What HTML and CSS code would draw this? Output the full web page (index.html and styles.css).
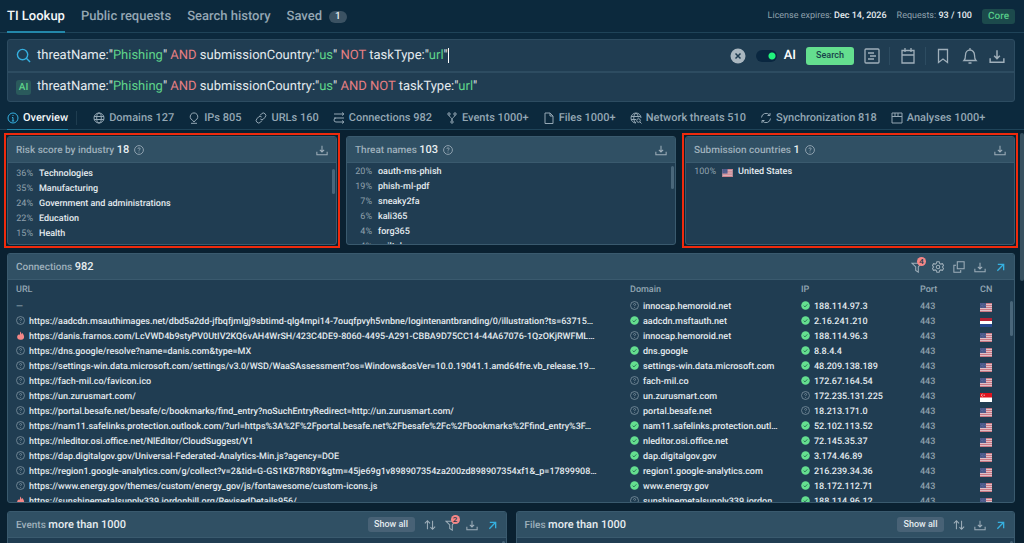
FILE: index.html
```html
<!DOCTYPE html>
<html lang="en">
<head>
<meta charset="utf-8">
<meta name="viewport" content="width=device-width, initial-scale=1">
<title>TI Lookup</title>
<link rel="stylesheet" href="styles.css">
</head>
<body>
<svg class="sprite" aria-hidden="true">
  <symbol id="download" viewBox="0 0 14 14"><path d="M7 2v7M4.500 6.800L7 9.300l2.500-2.500M1 9v3.500h12V9"/></symbol>
  <symbol id="help" viewBox="0 0 12 12"><circle cx="6" cy="6" r="5.300"/><path d="M4.700 4.800c0-2 2.700-1.800 2.700-.2 0 1-1.400 1-1.400 2.200M6 8v1"/></symbol>
  <symbol id="ok" viewBox="0 0 12 12"><circle cx="6" cy="6" r="5.700" fill="#64de8f" stroke="none"/><path d="M3.500 6.200l1.800 1.700 3.200-3.500" stroke="#1d5a49"/></symbol>
  <symbol id="fire" viewBox="0 0 12 12"><path d="M5.500.5c2 1.500 1.600 3 1.700 4l1.300-1.700c1.500 2 2.300 3.500 2.300 5A4.300 4 0 0 1 6 11.700 4.300 4 0 0 1 1.500 8c0-2 1-3 2-3.500l.8 1.200C5.500 4 5.700 2.500 5.500.5z" fill="#f58787" stroke="none"/></symbol>
  <symbol id="arrow" viewBox="0 0 10 10"><path d="M2 1.500h6.500V8M8.500 1.500L1.500 8.500"/></symbol>
  <symbol id="filter" viewBox="0 0 14 14"><path d="M1 2.500h11L8.500 7v6L5.500 11V7z"/></symbol>
  <symbol id="sort" viewBox="0 0 14 14"><path d="M4 12V2M1 5l3-3 3 3M10 2v10M7.500 9.500L10 12l3-3"/></symbol>
  <symbol id="gear" viewBox="0 0 14 14"><path d="M5.700.8h2.600l.6 2 1.300.8 2-.5 1.300 2.200L12.100 7l1.400 1.700-1.300 2.200-2-.5-1.300.8-.6 2H5.700l-.6-2-1.300-.8-2 .5L.5 8.700 1.900 7 .5 5.300l1.300-2.200 2 .5 1.300-.8z"/><circle cx="7" cy="7" r="2"/></symbol>
  <symbol id="copy" viewBox="0 0 14 14"><path d="M5 1h8v8H5zM3.500 5H1v8h8v-2.500"/></symbol>
  <symbol id="us" viewBox="0 0 12 9"><path fill="#dfbfc6" stroke="none" d="M0 0h12v9H0z"/><path stroke="#c97884" stroke-width="1" d="M0 .5h12M0 2.500h12M0 4.500h12M0 6.500h12M0 8.500h12"/><path fill="#485587" stroke="none" d="M0 0h6v5H0z"/><path stroke="#8791b5" stroke-width=".5" stroke-dasharray=".6 .8" d="M.5 1h5M1 2.500h5M.5 4h5"/></symbol>
  <symbol id="nl" viewBox="0 0 12 9"><path fill="#fff" stroke="none" d="M0 0h12v9H0z"/><path fill="#b32134" stroke="none" d="M0 0h12v3H0z"/><path fill="#26478e" stroke="none" d="M0 6h12v3H0z"/></symbol>
  <symbol id="sg" viewBox="0 0 12 9"><path fill="#fff" stroke="none" d="M0 0h12v9H0z"/><path fill="#e0141f" stroke="none" d="M0 0h12v4.500H0z"/><path stroke="#fff" stroke-width=".7" d="M2.500 1a1.300 1.300 0 0 0 0 2.500M3.500 2.200h1.500"/></symbol>
</svg>

<header class="topbar">
  <nav class="topnav" aria-label="Main">
    <a class="active" href="#">TI Lookup</a>
    <a href="#">Public requests</a>
    <a href="#">Search history</a>
    <a href="#">Saved <span class="count">1</span></a>
  </nav>
  <div class="license">
    <span>License expires: <b>Dec 14, 2026</b></span>
    <span>Requests: <b>93 / 100</b></span>
    <span class="plan">Core</span>
  </div>
</header>

<section class="search">
  <div class="search-row">
    <svg class="lens" viewBox="0 0 16 16"><circle cx="7" cy="7" r="5.500"/><path d="M11 11l4 4"/></svg>
    <div class="query">
      <div class="highlight" aria-hidden="true">threatName:"<i>Phishing</i>" <em>AND</em> submissionCountry:"<i>us</i>" <em>NOT</em> taskType:"<i>url</i>"<span class="caret"></span></div>
      <input class="query-input" type="text" aria-label="Search query">
    </div>
    <div class="tools">
      <button class="clear" aria-label="Clear"><svg viewBox="0 0 16 16"><circle cx="8" cy="8" r="7.500" fill="#aab7c0" stroke="none"/><path d="M5.500 5.500l5 5M10.500 5.500l-5 5" stroke="#203d52" stroke-width="1.500"/></svg></button>
      <label class="ai"><input type="checkbox" role="switch" checked><span>AI</span></label>
      <button class="go">Search</button>
      <button class="tool" aria-label="Templates"><svg viewBox="0 0 16 16"><rect x="1" y="1" width="14" height="14" rx="1"/><path d="M4 5h6M6 8h6M4 11h6"/></svg></button>
      <button class="tool split" aria-label="Period"><svg viewBox="0 0 16 16"><path d="M2 2.500h12V15H2zM2 7h12M5 0v4M11 0v4"/></svg></button>
      <button class="tool split near" aria-label="Bookmark"><svg viewBox="0 0 16 16"><path d="M3.500 1.500h9v13L8 11l-4.500 3.500z"/></svg></button>
      <button class="tool" aria-label="Notifications"><svg viewBox="0 0 16 16"><path d="M8 0v1.500M2 12.500c1.500-1.500 1.500-3 1.500-5.500a4.500 5 0 0 1 9 0c0 2.500 0 4 1.500 5.500zM6.500 15h3"/></svg></button>
      <button class="tool" aria-label="Download"><svg viewBox="0 0 14 14"><use href="#download"/></svg></button>
    </div>
  </div>
  <div class="search-row suggestion">
    <span class="ai-tag">AI</span>
    <div class="highlight">threatName:"<i>Phishing</i>" <em>AND</em> submissionCountry:"<i>us</i>" <em>AND NOT</em> taskType:"<i>url</i>"</div>
  </div>
</section>

<nav class="tabs" aria-label="Results">
  <a class="active" href="#"><svg viewBox="0 0 12 12"><circle cx="6" cy="6" r="5"/><path d="M6 3v1M5 5.500h1V9M4.800 9h2.400"/></svg>Overview</a>
  <span class="divider"></span>
  <a href="#"><svg viewBox="0 0 12 12"><circle cx="6" cy="6" r="5"/><ellipse cx="6" cy="6" rx="2.300" ry="5"/><path d="M1 4.500h10M1 7.500h10"/></svg>Domains 127</a>
  <a href="#"><svg viewBox="0 0 12 12"><path d="M4.500 8.200a3.800 3.800 0 1 1 3 0L6 10zM3 11.300h6"/></svg>IPs 805</a>
  <a href="#"><svg viewBox="0 0 12 12"><path d="M5 3.500l1.500-1.700a2.400 2.400 0 0 1 3.600 3.400L8.500 7a2.400 2.400 0 0 1-3.200 0M7 8.500l-1.500 1.700a2.400 2.400 0 0 1-3.600-3.400L3.500 5a2.400 2.400 0 0 1 3.200 0"/></svg>URLs 160</a>
  <a href="#"><svg viewBox="0 0 12 12"><path d="M1 2h9M9 .5L11 2 9 3.500M11 6H3a2 2 0 0 0 0 4h7M1 6h2M9 8.500l2 1.500-2 1.500"/></svg>Connections 982</a>
  <a href="#"><svg viewBox="0 0 12 12"><circle cx="3" cy="2" r="1.200"/><circle cx="9" cy="2" r="1.200"/><circle cx="6" cy="10" r="1.200"/><path d="M3 3.200C3 5.500 6 4.500 6 8.500M9 3.200c0 2.300-3 1.300-3 5.300"/></svg>Events 1000+</a>
  <a href="#"><svg viewBox="0 0 12 12"><path d="M2 1h5l3 3v7.500H2zM7 1v3h3"/></svg>Files 1000+</a>
  <a href="#"><svg viewBox="0 0 12 12"><path d="M6 11A5 5 0 1 1 11 6M6 11c-3-2-3-8 0-10 1.500 1.200 2.200 3 2.300 4.500M1 4.500h9.700M1 7.500h5"/><circle cx="8.500" cy="8.500" r="1.800"/><path d="M10 10l1.500 1.500"/></svg>Network threats 510</a>
  <a href="#"><svg viewBox="0 0 12 12"><path d="M1.500 5.500A4.500 4.500 0 0 1 9.500 3M10 1v2.500H7.500M10.500 6.500A4.500 4.500 0 0 1 2.500 9M2 11V8.500h2.500"/></svg>Synchronization 818</a>
  <a href="#"><svg viewBox="0 0 12 12"><path d="M1 1h10v10H1zM1 4.500h10M4 1v3.500M7 1v3.500"/></svg>Analyses 1000+</a>
</nav>

<main class="results">
  <div class="cards">
    <div class="slot marked">
    <section class="card">
      <header class="card-head"><h2>Risk score by industry <b>18</b></h2><svg class="q" viewBox="0 0 12 12"><use href="#help"/></svg>
        <div class="actions"><button aria-label="Download"><svg viewBox="0 0 14 14"><use href="#download"/></svg></button></div></header>
      <ul class="list roomy">
        <li><span>36%</span>Technologies</li>
        <li><span>35%</span>Manufacturing</li>
        <li><span>24%</span>Government and administrations</li>
        <li><span>22%</span>Education</li>
        <li><span>15%</span>Health</li>
      </ul>
      <div class="thumb"></div>
    </section>
    </div>
    <div class="slot">
    <section class="card">
      <header class="card-head"><h2>Threat names <b>103</b></h2><svg class="q" viewBox="0 0 12 12"><use href="#help"/></svg>
        <div class="actions"><button aria-label="Download"><svg viewBox="0 0 14 14"><use href="#download"/></svg></button></div></header>
      <ul class="list">
        <li><span>20%</span>oauth-ms-phish</li>
        <li><span>19%</span>phish-ml-pdf</li>
        <li><span>7%</span>sneaky2fa</li>
        <li><span>6%</span>kali365</li>
        <li><span>4%</span>forg365</li>
        <li><span>4%</span>eviltokens</li>
      </ul>
      <div class="thumb high"></div>
    </section>
    </div>
    <div class="slot marked">
    <section class="card">
      <header class="card-head"><h2>Submission countries <b>1</b></h2><svg class="q" viewBox="0 0 12 12"><use href="#help"/></svg>
        <div class="actions"><button aria-label="Download"><svg viewBox="0 0 14 14"><use href="#download"/></svg></button></div></header>
      <ul class="list wide">
        <li><span>100%</span><svg class="flag" viewBox="0 0 12 9"><use href="#us"/></svg>United States</li>
      </ul>
    </section>
    </div>
  </div>

  <section class="card connections">
    <header class="card-head"><h2>Connections <b>982</b></h2>
      <div class="actions">
        <button class="has-badge" aria-label="Filter"><svg viewBox="0 0 14 14"><use href="#filter"/></svg><span class="badge">4</span></button>
        <button aria-label="Settings"><svg viewBox="0 0 14 14"><use href="#gear"/></svg></button>
        <button aria-label="Copy"><svg viewBox="0 0 14 14"><use href="#copy"/></svg></button>
        <button aria-label="Download"><svg viewBox="0 0 14 14"><use href="#download"/></svg></button>
        <button class="open" aria-label="Open"><svg viewBox="0 0 10 10"><use href="#arrow"/></svg></button>
      </div></header>
    <table>
      <colgroup><col><col class="c-domain"><col class="c-ip"><col class="c-port"><col class="c-cn"></colgroup>
      <thead><tr><th>URL</th><th>Domain</th><th>IP</th><th>Port</th><th>CN</th></tr></thead>
      <tbody>
        <tr><td class="muted">—</td><td><svg class="s" viewBox="0 0 12 12"><use href="#help"/></svg>innocap.hemoroid.net</td><td><svg class="s" viewBox="0 0 12 12"><use href="#ok"/></svg>188.114.97.3</td><td class="muted">443</td><td><svg class="flag" viewBox="0 0 12 9"><use href="#us"/></svg></td></tr>
        <tr><td><svg class="s" viewBox="0 0 12 12"><use href="#help"/></svg>https://aadcdn.msauthimages.net/dbd5a2dd-jfbqfjmlgj9sbtimd-qlg4mpi14-7ouqfpvyh5vnbne/logintenantbranding/0/illustration?ts=63715…</td><td><svg class="s" viewBox="0 0 12 12"><use href="#ok"/></svg>aadcdn.msftauth.net</td><td><svg class="s" viewBox="0 0 12 12"><use href="#ok"/></svg>2.16.241.210</td><td class="muted">443</td><td><svg class="flag" viewBox="0 0 12 9"><use href="#nl"/></svg></td></tr>
        <tr><td><svg class="s" viewBox="0 0 12 12"><use href="#fire"/></svg>https://danis.frarnos.com/LcVWD4b9styPV0UtIV2KQ6vAH4WrSH/423C4DE9-8060-4495-A291-CBBA9D75CC14-44A67076-1QzOKjRWFML…</td><td><svg class="s" viewBox="0 0 12 12"><use href="#help"/></svg>innocap.hemoroid.net</td><td><svg class="s" viewBox="0 0 12 12"><use href="#ok"/></svg>188.114.96.3</td><td class="muted">443</td><td><svg class="flag" viewBox="0 0 12 9"><use href="#us"/></svg></td></tr>
        <tr><td><svg class="s" viewBox="0 0 12 12"><use href="#help"/></svg>https://dns.google/resolve?name=danis.com&amp;type=MX</td><td><svg class="s" viewBox="0 0 12 12"><use href="#ok"/></svg>dns.google</td><td><svg class="s" viewBox="0 0 12 12"><use href="#ok"/></svg>8.8.4.4</td><td class="muted">443</td><td><svg class="flag" viewBox="0 0 12 9"><use href="#us"/></svg></td></tr>
        <tr><td><svg class="s" viewBox="0 0 12 12"><use href="#help"/></svg>https://settings-win.data.microsoft.com/settings/v3.0/WSD/WaaSAssessment?os=Windows&amp;osVer=10.0.19041.1.amd64fre.vb_release.19…</td><td><svg class="s" viewBox="0 0 12 12"><use href="#ok"/></svg>settings-win.data.microsoft.com</td><td><svg class="s" viewBox="0 0 12 12"><use href="#ok"/></svg>48.209.138.189</td><td class="muted">443</td><td><svg class="flag" viewBox="0 0 12 9"><use href="#us"/></svg></td></tr>
        <tr><td><svg class="s" viewBox="0 0 12 12"><use href="#help"/></svg>https://fach-mil.co/favicon.ico</td><td><svg class="s" viewBox="0 0 12 12"><use href="#help"/></svg>fach-mil.co</td><td><svg class="s" viewBox="0 0 12 12"><use href="#ok"/></svg>172.67.164.54</td><td class="muted">443</td><td><svg class="flag" viewBox="0 0 12 9"><use href="#us"/></svg></td></tr>
        <tr><td><svg class="s" viewBox="0 0 12 12"><use href="#help"/></svg>https://un.zurusmart.com/</td><td><svg class="s" viewBox="0 0 12 12"><use href="#help"/></svg>un.zurusmart.com</td><td><svg class="s" viewBox="0 0 12 12"><use href="#help"/></svg>172.235.131.225</td><td class="muted">443</td><td><svg class="flag" viewBox="0 0 12 9"><use href="#sg"/></svg></td></tr>
        <tr><td><svg class="s" viewBox="0 0 12 12"><use href="#help"/></svg>https://portal.besafe.net/besafe/c/bookmarks/find_entry?noSuchEntryRedirect=http://un.zurusmart.com/</td><td><svg class="s" viewBox="0 0 12 12"><use href="#help"/></svg>portal.besafe.net</td><td><svg class="s" viewBox="0 0 12 12"><use href="#help"/></svg>18.213.171.0</td><td class="muted">443</td><td><svg class="flag" viewBox="0 0 12 9"><use href="#us"/></svg></td></tr>
        <tr><td><svg class="s" viewBox="0 0 12 12"><use href="#help"/></svg>https://nam11.safelinks.protection.outlook.com/?url=https%3A%2F%2Fportal.besafe.net%2Fbesafe%2Fc%2Fbookmarks%2Ffind_entry%3F…</td><td><svg class="s" viewBox="0 0 12 12"><use href="#ok"/></svg>nam11.safelinks.protection.outl…</td><td><svg class="s" viewBox="0 0 12 12"><use href="#ok"/></svg>52.102.113.52</td><td class="muted">443</td><td><svg class="flag" viewBox="0 0 12 9"><use href="#us"/></svg></td></tr>
        <tr><td><svg class="s" viewBox="0 0 12 12"><use href="#help"/></svg>https://nleditor.osi.office.net/NlEditor/CloudSuggest/V1</td><td><svg class="s" viewBox="0 0 12 12"><use href="#ok"/></svg>nleditor.osi.office.net</td><td><svg class="s" viewBox="0 0 12 12"><use href="#ok"/></svg>72.145.35.37</td><td class="muted">443</td><td><svg class="flag" viewBox="0 0 12 9"><use href="#us"/></svg></td></tr>
        <tr><td><svg class="s" viewBox="0 0 12 12"><use href="#help"/></svg>https://dap.digitalgov.gov/Universal-Federated-Analytics-Min.js?agency=DOE</td><td><svg class="s" viewBox="0 0 12 12"><use href="#ok"/></svg>dap.digitalgov.gov</td><td><svg class="s" viewBox="0 0 12 12"><use href="#ok"/></svg>3.174.46.89</td><td class="muted">443</td><td><svg class="flag" viewBox="0 0 12 9"><use href="#us"/></svg></td></tr>
        <tr><td><svg class="s" viewBox="0 0 12 12"><use href="#help"/></svg>https://region1.google-analytics.com/g/collect?v=2&amp;tid=G-GS1KB7R8DY&amp;gtm=45je69g1v898907354za200zd898907354xf1&amp;_p=17899908…</td><td><svg class="s" viewBox="0 0 12 12"><use href="#ok"/></svg>region1.google-analytics.com</td><td><svg class="s" viewBox="0 0 12 12"><use href="#ok"/></svg>216.239.34.36</td><td class="muted">443</td><td><svg class="flag" viewBox="0 0 12 9"><use href="#us"/></svg></td></tr>
        <tr><td><svg class="s" viewBox="0 0 12 12"><use href="#help"/></svg>https://www.energy.gov/themes/custom/energy_gov/js/fontawesome/custom-icons.js</td><td><svg class="s" viewBox="0 0 12 12"><use href="#ok"/></svg>www.energy.gov</td><td><svg class="s" viewBox="0 0 12 12"><use href="#ok"/></svg>18.172.112.71</td><td class="muted">443</td><td><svg class="flag" viewBox="0 0 12 9"><use href="#us"/></svg></td></tr>
        <tr><td><svg class="s" viewBox="0 0 12 12"><use href="#fire"/></svg>https://sunshinemetalsupply339.jordonhill.org/RevisedDetails956/</td><td><svg class="s" viewBox="0 0 12 12"><use href="#help"/></svg>sunshinemetalsupply339.jordon…</td><td><svg class="s" viewBox="0 0 12 12"><use href="#ok"/></svg>188.114.96.12</td><td class="muted">443</td><td><svg class="flag" viewBox="0 0 12 9"><use href="#us"/></svg></td></tr>
      </tbody>
    </table>
    <div class="thumb table-thumb"></div>
  </section>

  <div class="cards">
    <div class="slot">
    <section class="card peek">
      <header class="card-head"><h2>Events <b>more than 1000</b></h2>
        <div class="actions">
          <button class="show">Show all</button>
          <button aria-label="Sort"><svg viewBox="0 0 14 14"><use href="#sort"/></svg></button>
          <button class="has-badge" aria-label="Filter"><svg viewBox="0 0 14 14"><use href="#filter"/></svg><span class="badge">2</span></button>
          <button aria-label="Download"><svg viewBox="0 0 14 14"><use href="#download"/></svg></button>
          <button class="open" aria-label="Open"><svg viewBox="0 0 10 10"><use href="#arrow"/></svg></button>
        </div></header>
      <div class="thumb high"></div>
    </section>
    </div>
    <div class="slot">
    <section class="card peek">
      <header class="card-head"><h2>Files <b>more than 1000</b></h2>
        <div class="actions">
          <button class="show">Show all</button>
          <button aria-label="Sort"><svg viewBox="0 0 14 14"><use href="#sort"/></svg></button>
          <button aria-label="Download"><svg viewBox="0 0 14 14"><use href="#download"/></svg></button>
          <button class="open" aria-label="Open"><svg viewBox="0 0 10 10"><use href="#arrow"/></svg></button>
        </div></header>
      <div class="thumb high"></div>
    </section>
    </div>
  </div>
  <div class="thumb page-thumb"></div>
</main>
</body>
</html>
```
FILE: styles.css
```css
* { box-sizing: border-box; }

body {
  margin: 0;
  height: 100vh;
  overflow: hidden;
  display: flex;
  flex-direction: column;
  background: #0c293d;
  color: #e4ebef;
  font: 500 9px/15px Roboto, "Liberation Sans", sans-serif;
  text-rendering: geometricPrecision;
}

a { color: inherit; text-decoration: none; }
b { font-weight: 500; color: #e8eef1; }
svg { fill: none; stroke: currentColor; stroke-width: 1; flex: none; }
button {
  display: flex;
  align-items: center;
  justify-content: center;
  padding: 0;
  border: 0;
  background: none;
  color: #9fafba;
  font: inherit;
  cursor: pointer;
}

.sprite { position: absolute; width: 0; height: 0; }

/* Top bar */
.topbar {
  display: flex;
  justify-content: space-between;
  flex: none;
  height: 33px;
  padding: 0 9px 0 7px;
  border-bottom: 1px solid #1f4358;
}
.topnav { display: flex; gap: 16px; font-size: 13px; color: #94a7b4; }
.topnav a { display: flex; align-items: center; gap: 7px; height: 33px; padding-top: 2px; border-bottom: 2px solid transparent; }
.topnav .active { color: #f4f7f8; border-color: #2388aa; }
.count {
  padding: 0 6px;
  border-radius: 6px;
  background: #3b5263;
  color: #e4ebef;
  font-size: 10px;
  line-height: 12px;
}
.license { display: flex; align-items: center; gap: 10px; color: #8fa1ad; font-weight: 400; }
.plan { padding: 0 6px; border-radius: 3px; background: #1c4a4c; color: #55ca88; font-size: 10px; font-weight: 500; }

/* Search */
.search {
  flex: none;
  margin: 6px 9px 0 7px;
  border: 1px solid #2d4c61;
  border-radius: 3px;
  background: #203d52;
}
.search-row { display: flex; align-items: center; gap: 6px; height: 31px; padding: 0 4px 0 8px; }
.suggestion { height: 30px; border-top: 2px solid #2d4c61; }
.lens { width: 15px; height: 15px; color: #35b0e0; stroke-width: 1.5; }
.query { position: relative; flex: 1; }
.query-input {
  position: absolute;
  inset: 0;
  width: 100%;
  border: 0;
  outline: 0;
  background: transparent;
  color: transparent;
  font: inherit;
}
.highlight { font-size: 13px; line-height: 20px; font-weight: 400; white-space: nowrap; }
.highlight i { font-style: normal; color: #5fd48a; }
.highlight em { font-style: normal; color: #e67f82; }
.caret { border-right: 1px solid #fff; }
.ai-tag {
  width: 15px;
  border-radius: 3px;
  background: #2a5a5c;
  color: #5fd48a;
  font-size: 10px;
  text-align: center;
}
.tools { display: flex; align-items: center; }
.clear svg { width: 16px; height: 16px; }
.ai { display: flex; align-items: center; gap: 7px; margin: 0 10px; font-size: 13px; color: #fff; }
.ai input {
  appearance: none;
  width: 21px;
  height: 12px;
  margin: 0;
  border-radius: 6px;
  background: radial-gradient(circle at 16px 6px, #21f47c 3px, #0a2740 4px);
}
.go { width: 48px; height: 18px; border-radius: 3px; background: #64de8f; color: #17424a; }
.tool { width: 27px; height: 18px; }
.tool svg { width: 16px; height: 16px; stroke-width: 1.3; }
.go + .tool { margin: 0 4px; }
.split { width: 36px; border-left: 1px solid #2d4c61; }
.near { width: 31px; padding-left: 4px; }

/* Result tabs */
.tabs {
  display: flex;
  flex: none;
  gap: 14px;
  height: 28px;
  padding: 0 7px;
  border-bottom: 1px solid #1f4358;
  color: #94a7b4;
  font-size: 11px;
}
.tabs a { display: flex; align-items: center; gap: 4px; height: 29px; padding-top: 4px; border-bottom: 2px solid transparent; white-space: nowrap; }
.tabs svg { width: 12px; height: 12px; }
.tabs .active { color: #f4f7f8; border-color: #2388aa; }
.tabs .active svg { color: #35b0e0; }
.divider { width: 1px; height: 14px; margin: 9px 2px 0 -6px; background: #1f3d50; }

/* Results */
.results {
  position: relative;
  flex: 1;
  min-height: 0;
  overflow: hidden;
  display: flex;
  flex-direction: column;
  gap: 8px;
  padding: 6px 9px 0 7px;
  background: #0a2131;
}
.cards { display: flex; gap: 9px; flex: none; }
.slot { flex: 1; min-width: 0; }
.card {
  position: relative;
  height: 109px;
  overflow: hidden;
  border: 1px solid #3a5a6e;
  border-radius: 3px;
  background: #203d52;
}
.marked { outline: 2px solid #f02a0c; outline-offset: 1px; }
.connections { flex: none; height: 250px; }
.peek { height: 120px; }
.card-head {
  display: flex;
  align-items: center;
  height: 26px;
  padding: 0 8px;
  border-bottom: 1px solid #3a5a6e;
  background: #305064;
  color: #9fb0bc;
}
.card-head h2 { margin: 0; font-size: 10px; font-weight: 500; }
.card-head b { font-size: 11px; }
.q { width: 10px; height: 10px; margin-left: 5px; }
.actions { display: flex; align-items: center; gap: 9px; margin-left: auto; }
.actions svg { width: 12px; height: 12px; stroke-width: 1.2; }
.actions .open { color: #35b0e0; padding: 2px 1px 0; }
.actions .open svg { width: 9px; height: 9px; stroke-width: 1.5; }
.actions .show { width: 47px; border-radius: 3px; background: #486276; color: #e4ebef; }
.has-badge { position: relative; }
.badge {
  position: absolute;
  top: -4px;
  right: -3px;
  width: 9px;
  height: 9px;
  border-radius: 50%;
  background: #f58787;
  color: #27384a;
  font-size: 8px;
  line-height: 9px;
}

.list { margin: 0; padding: 2px 8px; list-style: none; }
.roomy { padding-top: 4px; }
.list li { display: flex; align-items: center; }
.list span { width: 17px; margin-right: 6px; text-align: right; color: #8fa1ad; font-weight: 400; }
.wide span { width: 22px; }
.flag { display: block; width: 12px; height: 9px; }
.list .flag { width: 11px; height: 8px; margin-right: 5px; }

.thumb {
  position: absolute;
  top: 32px;
  right: 1px;
  width: 3px;
  height: 25px;
  border-radius: 2px;
  background: #49667a;
}
.high { top: 29px; height: 23px; }
.table-thumb { top: 47px; height: 35px; }
.page-thumb { top: 3px; height: 148px; width: 4px; background: #37505f; right: 0; }

/* Connections */
table { width: 100%; table-layout: fixed; border-collapse: collapse; }
.c-domain { width: 171px; }
.c-ip { width: 119px; }
.c-port { width: 60px; }
.c-cn { width: 34px; }
th, td { height: 15px; padding: 0; text-align: left; font-weight: 500; white-space: nowrap; overflow: hidden; }
th { height: 20px; color: #94a7b4; }
th:first-child, td:first-child { padding-left: 8px; }
.muted { color: #8fa1ad; }
.s { width: 9px; height: 9px; margin-right: 4px; vertical-align: -1px; color: #8498a5; }
```
